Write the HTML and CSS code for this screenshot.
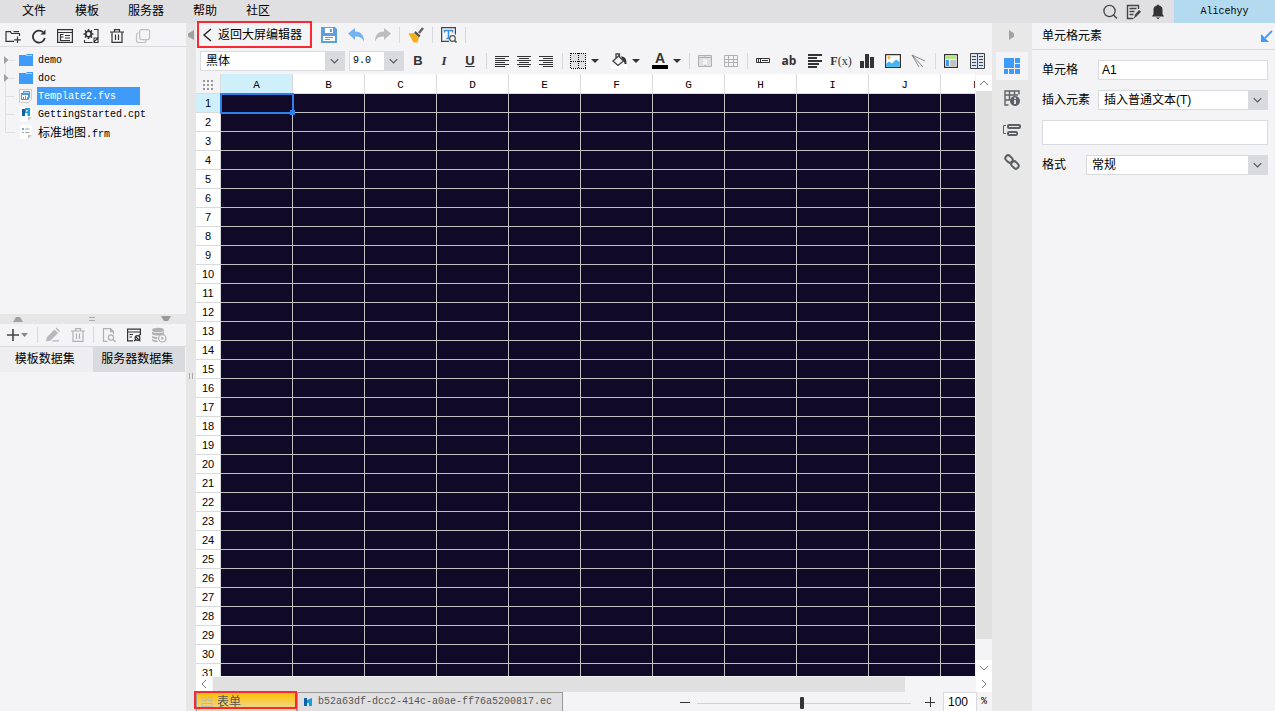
FILE: index.html
```html
<!DOCTYPE html>
<html lang="zh-CN">
<head>
    <meta charset="UTF-8">
    <meta name="viewport" content="width=device-width, initial-scale=1.0">
    <title>大屏编辑器</title>
    <link rel="stylesheet" href="styles.css">
</head>
<body>
    <header class="menubar">
        <nav class="menu">
            <a href="#">文件</a>
            <a href="#">模板</a>
            <a href="#">服务器</a>
            <a href="#">帮助</a>
            <a href="#">社区</a>
        </nav>
        <div class="account">
            <button class="icon-btn" aria-label="搜索"><svg viewBox="0 0 16 16"><circle cx="7.500" cy="7" r="5.600" fill="none" stroke="#444" stroke-width="1.300"/><path d="M11.500 11l3.500 3.500" stroke="#444" stroke-width="1.400"/></svg></button>
            <button class="icon-btn" aria-label="日志"><svg viewBox="0 0 16 16"><path d="M12.500 5V1.500h-11v13h6M3.500 4.500h7M3.500 7.500h5M3.500 10.500h4" fill="none" stroke="#444" stroke-width="1.400"/><path d="M8 14.500l1-4 4-4.500 2 1.500-4 5z" fill="#444"/><path d="M9 14.500l4-4" stroke="#e0e0e2"/></svg></button>
            <button class="icon-btn" aria-label="通知"><svg viewBox="0 0 16 16"><path d="M8 .5c1 0 1 .8 1 1 3 .6 3.500 2.500 3.500 4.500v4l1.500 2.500H2L3.500 10V6c0-2 .5-3.900 3.500-4.500 0-.2 0-1 1-1zM6 13.500h4L8 15.200z" fill="#333"/></svg></button>
            <a class="user mono" href="#">Alicehyy</a>
        </div>
    </header>

    <div class="workspace">
        <aside class="sidebar">
            <section class="files">
                <div class="side-tools">
                    <button class="icon-btn" aria-label="新建文件夹"><svg viewBox="0 0 16 16" fill="none" stroke="#333" stroke-width="1.200"><path d="M9 13.400H1V3.600h4.500l1 1.900h8V8M8.500 3.600H14M12.500 8.500v6.500M9.200 11.800h6.600"/></svg></button>
                    <button class="icon-btn" aria-label="刷新"><svg viewBox="0 0 16 16"><path d="M13.800 10A6 6 0 1 1 12 4.200" fill="none" stroke="#333" stroke-width="1.800"/><path d="M14.500 1.500v5h-5z" fill="#333"/></svg></button>
                    <button class="icon-btn" aria-label="模板目录"><svg viewBox="0 0 16 16" fill="none" stroke="#333" stroke-width="1.200"><path d="M.6 1.600h14.800v12.800H.6zM1 4.500h14M3.500 6v6.500h2M3.500 9h3M8 7.500h5M8 10h5M5.500 12.500h7.500M3.500 6.500h3"/></svg></button>
                    <button class="icon-btn" aria-label="设置"><svg viewBox="0 0 16 16" fill="none" stroke="#333"><circle cx="5.500" cy="6" r="2.800" stroke-width="1.800"/><path d="M5.500 1v1.800M5.500 9.200V11M.5 6h1.800M8.700 6h1.800M2 2.500l1.300 1.300M7.700 8.200L9 9.500M9 2.500L7.700 3.800M3.300 8.200L2 9.500" stroke-width="1.500"/><path d="M11 1.500h4v13h-4M1.500 12v2.500h8M11 10h4l-4 4z" stroke-width="1.100"/></svg></button>
                    <button class="icon-btn" aria-label="删除"><svg viewBox="0 0 16 16" fill="none" stroke="#333" stroke-width="1.200"><path d="M1 4h14M5.500 4V1.600h5V4M3 4v10.400h10V4M6.500 6.500V12M9.500 6.500V12"/></svg></button>
                    <button class="icon-btn" aria-label="复制" disabled><svg viewBox="0 0 16 16" fill="none" stroke="#c0c0c2" stroke-width="1.200"><rect x="4.600" y="1.600" width="10" height="10" rx="2"/><path d="M4.500 5H3a2 2 0 0 0-1.500 2v5.500a2 2 0 0 0 2 2H9a2 2 0 0 0 2-2v-.8"/></svg></button>
                </div>
                <ul class="tree">
                    <li><svg class="twig" viewBox="0 0 15 18"><path d="M5.500 9v9M9 9.500h6" stroke="#e0e0e2"/><path d="M4 5l4.500 4L4 13z" fill="#a0a0a0"/></svg><svg class="file" viewBox="0 0 16 16"><path d="M1 3h7l1-1h6v12H1z" fill="#3f9bfa"/><path d="M8 3.500h6" stroke="#fff" stroke-width=".6"/></svg><a class="mono" href="#">demo</a></li>
                    <li><svg class="twig" viewBox="0 0 15 18"><path d="M5.500 0v18M9 9.500h6" stroke="#e0e0e2"/><path d="M4 5l4.500 4L4 13z" fill="#a0a0a0"/></svg><svg class="file" viewBox="0 0 16 16"><path d="M1 3h7l1-1h6v12H1z" fill="#3f9bfa"/><path d="M8 3.500h6" stroke="#fff" stroke-width=".6"/></svg><a class="mono" href="#">doc</a></li>
                    <li><svg class="twig" viewBox="0 0 15 18"><path d="M5.500 0v18M6 9.500h9" stroke="#e0e0e2"/></svg><svg class="file" viewBox="0 0 16 16"><path d="M1.500 1.500h12v10l-3 3h-9z" fill="#f7f7f7" stroke="#ccc"/><path d="M5.500 3.500h6v6h-6z" fill="#b9dcf5" stroke="#4a9bd8"/><path d="M3.500 5.500h7v6h-7z" fill="#fff" stroke="#4a9bd8"/><path d="M3 6h8" stroke="#4a9bd8" stroke-width="2"/><path d="M5.500 11V9M7.500 11V8M9.500 11V9" stroke="#5aaf60"/></svg><a class="mono selected" href="#">Template2.fvs</a></li>
                    <li><svg class="twig" viewBox="0 0 15 18"><path d="M5.500 0v18M6 9.500h9" stroke="#e0e0e2"/></svg><svg class="file" viewBox="0 0 16 16"><path d="M2 1h12v10l-4 4H2z" fill="#fff"/><path d="M10 15v-4h4z" fill="#c8c8c8"/><path d="M4 3h3v7H4z" fill="#1262a8"/><path d="M7 2h5v8H9.500V7H7z" fill="#139fdc"/><path d="M8 4h1.500v1.500H8z" fill="#fff"/></svg><a class="mono" href="#">GettingStarted.cpt</a></li>
                    <li><svg class="twig" viewBox="0 0 15 18"><path d="M5.500 0v9.500H15" fill="none" stroke="#e0e0e2"/></svg><svg class="file" viewBox="0 0 16 16"><path d="M2 1h12v10l-4 4H2z" fill="#fff"/><path d="M10 15v-4h4z" fill="#c8c8c8"/><path d="M4 4h2v2H4z" fill="#7ba7c8"/><path d="M7 5h4.500M4 8.500h2M7 8.500h4.500" stroke="#aaa"/></svg><a href="#">标准地图<span class="mono">.frm</span></a></li>
                </ul>
            </section>
            <div class="splitter">
                <svg viewBox="0 0 10 6"><path d="M0 6l3-5h4l3 5z" fill="#a0a0a0"/></svg>
                <svg viewBox="0 0 10 6"><path d="M2 1.500h6M2 4.500h6" stroke="#aaa"/></svg>
                <svg viewBox="0 0 10 6"><path d="M0 0l3 5h4l3-5z" fill="#999"/></svg>
            </div>
            <section class="datasets">
                <div class="side-tools">
                    <button class="icon-btn wide" aria-label="新增数据集"><svg viewBox="0 0 24 16"><path d="M7 2v12M1 8h12" stroke="#444" stroke-width="1.600"/><path d="M15 6h7l-3.500 4z" fill="#888"/></svg></button>
                    <span class="sep"></span>
                    <button class="icon-btn" aria-label="编辑" disabled><svg viewBox="0 0 16 16" fill="#b8b8ba"><path d="M1 14.500l1-4.500 7.500-7.500L13 6l-7.500 7.500zM10.500 1.500l1-1L15 4l-1 1zM8 13.200h6v1.400H6.500z"/></svg></button>
                    <button class="icon-btn" aria-label="删除数据集" disabled><svg viewBox="0 0 16 16" fill="none" stroke="#b0b0b2" stroke-width="1.200"><path d="M1 4h14M5.500 4V1.600h5V4M3 4v10.400h10V4M6.500 6.500V12M9.500 6.500V12"/></svg></button>
                    <span class="sep"></span>
                    <button class="icon-btn" aria-label="预览" disabled><svg viewBox="0 0 16 16" fill="none" stroke="#b0b0b2" stroke-width="1.200"><path d="M6.500 14.400h-4V1.600h7l3 3V7M9.500 1.600v3h3"/><circle cx="10" cy="10.500" r="2.600"/><path d="M12 12.500l2.500 2.500"/></svg></button>
                    <button class="icon-btn" aria-label="连接"><svg viewBox="0 0 16 16" fill="none" stroke="#333" stroke-width="1.200"><path d="M7 13.900H1.600V2.100h12.800V7M1.600 5h12.800M3.500 7.500H7M3.500 10H6"/><path d="M8 14l2-1.500M13 8.500l2-1.500M9.500 9.500l4 4M14.400 14.400l-1-1"/><circle cx="11.500" cy="11" r="2.400"/></svg></button>
                    <button class="icon-btn" aria-label="数据库" disabled><svg viewBox="0 0 16 16" fill="#b0b0b2"><ellipse cx="7" cy="3" rx="6" ry="2.300"/><path d="M1 4.500c2 2 10 2 12 0V7c-2 2-10 2-12 0zM1 8.500c1 1 3 1.500 5.500 1.500L6 12c-2 0-4-.5-5-1.500zM1 12c1 1 3 1.300 5 1.300l1 1.700c-3 0-5-.5-6-1.500z"/><circle cx="11.300" cy="11.300" r="3.700" fill="#f4f4f6" stroke="#b0b0b2" stroke-width="1.200"/><path d="M10.300 9.500l3 1.800-3 1.800z"/></svg></button>
                </div>
                <div class="dataset-tabs">
                    <button>模板数据集</button>
                    <button class="active">服务器数据集</button>
                </div>
            </section>
        </aside>

        <div class="gutter">
            <svg viewBox="0 0 10 12"><path d="M8 1v10L2 7.500v-3z" fill="#a0a0a0"/></svg>
            <svg class="grip" viewBox="0 0 10 12"><path d="M3.500 3v6M6.500 3v6" stroke="#aaa"/></svg>
        </div>

        <main class="editor">
            <div class="toolbar top">
                <button class="back"><svg viewBox="0 0 10 14"><path d="M9 1L2 7l7 6" fill="none" stroke="#222" stroke-width="1.400"/></svg>返回大屏编辑器</button>
                <div class="tools loose">
                    <button class="icon-btn" aria-label="保存"><svg viewBox="0 0 16 16"><path d="M0 0h14l2 2v14H0z" fill="#5c9fdf"/><path d="M4 1h8v5H4zM2 9h12v5H2z" fill="#fff"/><path d="M9 2h2v3H9z" fill="#5c9fdf"/><path d="M4 10.500h8M4 12.500h5" stroke="#5c9fdf"/></svg></button>
                    <button class="icon-btn" aria-label="撤销"><svg viewBox="0 0 16 16"><path d="M0 6.500L7 1v3.500c5.500 0 9 3 9 10C14 10.500 11.500 9.500 7 9.500V13z" fill="#74b3ee"/></svg></button>
                    <button class="icon-btn" aria-label="重做"><svg viewBox="0 0 16 16"><path d="M16 6.500L9 1v3.500C3.500 4.500 0 7.500 0 14.500 2 10.500 4.500 9.500 9 9.500V13z" fill="#bcbcbe"/></svg></button>
                </div>
                <span class="sep"></span>
                <button class="icon-btn" aria-label="格式刷"><svg viewBox="0 0 16 16"><path d="M15 1l-4 5" stroke="#666" stroke-width="2.600"/><path d="M7.500 4l5 4.500-1.500 2L6 6z" fill="#555"/><path d="M.5 6.500L6 6l5 4.500-1.500 5H5.500z" fill="#f5ae1c"/></svg></button>
                <span class="sep"></span>
                <button class="icon-btn" aria-label="查找文本"><svg viewBox="0 0 16 16" fill="none"><path d="M8 14.400H.6V.6h13.800v7" stroke="#444" stroke-width="1.200"/><path d="M3.500 5.500v-2h8v2M7.500 3.500v8M5.500 11.500h3" stroke="#3b8ee0" stroke-width="1.500"/><circle cx="11.500" cy="11.500" r="2.800" fill="#f4f4f6" stroke="#555" stroke-width="1.200"/><path d="M13.500 13.500l2 2" stroke="#555" stroke-width="1.600"/></svg></button>
                <span class="sep"></span>
            </div>

            <div class="toolbar format">
                <div class="dropdown font-name">
                    <select aria-label="字体"><option>黑体</option></select>
                    <svg viewBox="0 0 20 18"><path d="M6 7l4 4 4-4" fill="none" stroke="#555" stroke-width="1.200"/></svg>
                </div>
                <div class="dropdown font-size">
                    <select class="mono" aria-label="字号"><option>9.0</option></select>
                    <svg viewBox="0 0 20 18"><path d="M6 7l4 4 4-4" fill="none" stroke="#555" stroke-width="1.200"/></svg>
                </div>
                <div class="tools">
                    <button class="icon-btn letter"><b>B</b></button>
                    <button class="icon-btn letter"><i>I</i></button>
                    <button class="icon-btn letter"><u>U</u></button>
                </div>
                <span class="sep"></span>
                <div class="tools tight">
                    <button class="icon-btn" aria-label="左对齐"><svg viewBox="0 0 16 16"><path d="M1 3.500h14M1 5.500h10M1 7.500h14M1 9.500h10M1 11.500h14M1 13.500h10" stroke="#333"/></svg></button>
                    <button class="icon-btn" aria-label="居中"><svg viewBox="0 0 16 16"><path d="M1 3.500h14M3 5.500h10M1 7.500h14M3 9.500h10M1 11.500h14M3 13.500h10" stroke="#333"/></svg></button>
                    <button class="icon-btn" aria-label="右对齐"><svg viewBox="0 0 16 16"><path d="M1 3.500h14M5 5.500h10M1 7.500h14M5 9.500h10M1 11.500h14M5 13.500h10" stroke="#333"/></svg></button>
                </div>
                <span class="sep"></span>
                <div class="tools pickers">
                    <button class="picker" aria-label="边框"><svg viewBox="0 0 16 16"><path d="M1 1h14v14H1z" fill="#e0e0e2"/><path d="M1 .5h15M1 8.500h15M1 15.500h15M.5 0v16M8.500 0v16M15.500 0v16" stroke="#000" stroke-dasharray="1 1"/></svg><span class="caret"></span></button>
                    <button class="picker" aria-label="填充颜色"><svg viewBox="0 0 16 16"><path d="M0 12h16v4H0z" fill="#fff"/><path d="M2 8l5.500-5 5 5L7 12.500zM5 6V1h3.500v4" fill="#f4f4f6" stroke="#444" stroke-width="1.300"/><path d="M10 3.500c4 0 5.500 2 5.500 7.500h-2c0-2-.5-3-1.500-3.500z" fill="#333"/></svg><span class="caret"></span></button>
                    <button class="picker" aria-label="字体颜色"><span class="font-color">A</span><span class="caret"></span></button>
                </div>
                <span class="sep"></span>
                <div class="tools">
                    <button class="icon-btn" aria-label="合并单元格" disabled><svg viewBox="0 0 16 16"><path d="M1.500 2.500h13v11h-13z" fill="#e0e0e2" stroke="#b0b0b2"/><path d="M1 4.500h14M8 2v3M8 11v3" stroke="#b0b0b2"/><path d="M6 7h3.500v4H6.500V9h3" fill="none" stroke="#fff"/></svg></button>
                    <button class="icon-btn" aria-label="拆分单元格" disabled><svg viewBox="0 0 16 16"><path d="M1.500 2.500h13v11h-13zM1 6.500h14M1 9.500h14M5.500 2v12M10.500 2v12" fill="none" stroke="#b0b0b2"/></svg></button>
                </div>
                <span class="sep"></span>
                <div class="tools">
                    <button class="icon-btn" aria-label="数据列"><svg viewBox="0 0 16 16"><path d="M1.500 5.500h13v4h-13zM5.500 5v5M3.500 6v3M7 7.500h6" fill="none" stroke="#333"/></svg></button>
                    <button class="icon-btn letter ab">ab</button>
                    <button class="icon-btn" aria-label="富文本"><svg viewBox="0 0 16 16"><path d="M1 2h14M1 5h9M1 8h14M1 11h11M1 14h9" stroke="#333" stroke-width="1.800"/></svg></button>
                    <button class="icon-btn letter fx"><b>F</b>(x)</button>
                    <button class="icon-btn" aria-label="图表"><svg viewBox="0 0 16 16"><path d="M1 8h4v7H1zM6 1h4v14H6zM11 4h4v11h-4z" fill="#333"/></svg></button>
                    <button class="icon-btn" aria-label="图片"><svg viewBox="0 0 16 16"><path d="M.6 1.600h14.800v12.800H.6z" fill="#fff" stroke="#333" stroke-width="1.200"/><path d="M1.200 13.800v-3L4 8.500l3 2 4-4 3.800 2.500v4.800z" fill="#3fb8f5"/><circle cx="4" cy="4.500" r="1.500" fill="#f5b53c"/></svg></button>
                    <button class="icon-btn" aria-label="斜线"><svg viewBox="0 0 16 16"><path d="M1 2l13 6M1 2l11 12M1 2l7 12" fill="none" stroke="#888"/></svg></button>
                </div>
                <span class="sep"></span>
                <div class="tools">
                    <button class="icon-btn" aria-label="子报表"><svg viewBox="0 0 16 16"><path d="M1.600 1.600h12.800v12.800H1.600z" fill="#fff" stroke="#333" stroke-width="1.200"/><path d="M3 3h10v3H3z" fill="#b3e67e"/><path d="M3 7h3v6H3z" fill="#3f9bfa"/><path d="M7 7h6v6H7z" fill="#c4c4c6"/></svg></button>
                    <button class="icon-btn" aria-label="分栏"><svg viewBox="0 0 16 16"><path d="M1.500.5h14v15h-14z" fill="#dce8fa" stroke="#444"/><path d="M8.500 1v14M3 3.500h4M3 6.500h4M3 9.500h4M3 12.500h4M10 3.500h4M10 6.500h4M10 9.500h4M10 12.500h4" stroke="#444"/></svg></button>
                </div>
            </div>

            <div class="sheet">
                <div class="cells">
                    <table id="grid">
                        <thead>
                            <tr>
                                <th class="corner"><svg viewBox="0 0 12 10"><path d="M1 1h12M1 5h12M1 9h12" stroke="#999" stroke-width="2" stroke-dasharray="2 2"/></svg></th>
                            </tr>
                        </thead>
                        <tbody></tbody>
                    </table>
                </div>
                <div class="scroll vertical">
                    <button aria-label="向上"><svg viewBox="0 0 16 16"><path d="M4 10l4-4 4 4" fill="none" stroke="#777"/></svg></button>
                    <div class="thumb"></div>
                    <button aria-label="向下"><svg viewBox="0 0 16 16"><path d="M4 6l4 4 4-4" fill="none" stroke="#777"/></svg></button>
                </div>
            </div>
            <div class="scroll horizontal">
                <button aria-label="向左"><svg viewBox="0 0 16 16"><path d="M10 4L6 8l4 4" fill="none" stroke="#777"/></svg></button>
                <div class="thumb"></div>
                <button aria-label="向右"><svg viewBox="0 0 16 16"><path d="M6 4l4 4-4 4" fill="none" stroke="#777"/></svg></button>
            </div>

            <footer class="statusbar">
                <button class="sheet-tab current"><svg viewBox="0 0 12 12"><path d="M1 1.500h4v3H1zM7 1.500h4v3H7zM1 7.500h10v3H1z" fill="none" stroke="#b8b8b8"/></svg>表单</button>
                <button class="sheet-tab mono"><svg viewBox="0 0 12 12"><path d="M2 2h3v8H2z" fill="#1262a8"/><path d="M5 4l5-2v8H7V7H5z" fill="#139fdc"/></svg>b52a63df-dcc2-414c-a0ae-ff76a5200817.ec</button>
                <div class="zoom">
                    <button class="step" aria-label="缩小"><svg viewBox="0 0 10 10"><path d="M0 5.500h10" stroke="#333"/></svg></button>
                    <input type="range" aria-label="缩放" min="0" max="100" value="49">
                    <button class="step" aria-label="放大"><svg viewBox="0 0 10 10"><path d="M0 5.500h10M5.500 0v10" stroke="#333"/></svg></button>
                    <input type="text" id="zoomValue" value="100">
                    <label class="mono" for="zoomValue">%</label>
                </div>
            </footer>
        </main>

        <nav class="rail">
            <svg class="fold" viewBox="0 0 8 12"><path d="M1 1v10l5-3.500v-3z" fill="#a0a0a0"/></svg>
            <button class="active" aria-label="单元格元素"><svg viewBox="0 0 16 16" fill="#3f9bfa"><path d="M0 0h10v10H0zM11 0h5v5h-5zM11 6h5v4h-5zM0 11h4v5H0zM5 11h5v5H5zM11 11h5v5h-5z"/></svg></button>
            <button aria-label="单元格属性"><svg viewBox="0 0 16 16"><path d="M4.500 15H1V1h14v3.500M1 5h13M1 10h5M5.500 1v9M10.500 1v4" fill="none" stroke="#5c6066" stroke-width="1.400"/><circle cx="11" cy="11" r="5" fill="#5c6066"/><path d="M11 7.500v1.600M11 10v4" stroke="#fff" stroke-width="1.600"/></svg></button>
            <button aria-label="条件属性"><svg viewBox="0 0 18 16" fill="none" stroke="#5c6066"><path d="M3 3.500H.5v8H3"/><rect x="5" y="3" width="12" height="3" rx="1" stroke-width="2"/><rect x="5" y="10" width="9" height="3" rx="1" stroke-width="2"/></svg></button>
            <button aria-label="超级链接"><svg viewBox="0 0 16 16" fill="none" stroke="#5c6066" stroke-width="2"><rect x="-4" y="-2.800" width="8" height="5.600" rx="2.800" transform="translate(5 5) rotate(45)"/><rect x="-4" y="-2.800" width="8" height="5.600" rx="2.800" transform="translate(11 11) rotate(45)"/></svg></button>
        </nav>

        <aside class="panel">
            <div class="panel-title">单元格元素
                <button class="icon-btn" aria-label="弹出"><svg viewBox="0 0 16 16"><path d="M13 3L6 10" stroke="#3f9bfa" stroke-width="1.800"/><path d="M2 6v8h8z" fill="#3f9bfa"/></svg></button>
            </div>
            <form class="props">
                <div class="field">
                    <label for="cellName">单元格</label>
                    <input type="text" id="cellName" value="A1">
                </div>
                <div class="field">
                    <label for="element">插入元素</label>
                    <div class="dropdown">
                        <select id="element"><option>插入普通文本(T)</option></select>
                        <svg viewBox="0 0 20 18"><path d="M6 7l4 4 4-4" fill="none" stroke="#555" stroke-width="1.200"/></svg>
                    </div>
                </div>
                <input type="text" class="content" aria-label="内容">
                <div class="field short">
                    <label for="cellFormat">格式</label>
                    <div class="dropdown">
                        <select id="cellFormat"><option>常规</option></select>
                        <svg viewBox="0 0 20 18"><path d="M6 7l4 4 4-4" fill="none" stroke="#555" stroke-width="1.200"/></svg>
                    </div>
                </div>
            </form>
        </aside>
    </div>

    <script>
        const columns = 'ABCDEFGHIJK'.split('');
        const rowCount = 31;

        function renderGrid() {
            const headRow = document.querySelector('#grid thead tr');
            const body = document.querySelector('#grid tbody');

            for (const name of columns) {
                const th = document.createElement('th');
                th.textContent = name;
                if (name === 'A') th.className = 'active';
                headRow.appendChild(th);
            }

            for (let i = 1; i <= rowCount; i++) {
                const row = document.createElement('tr');
                row.innerHTML = `<th class="${i === 1 ? 'active' : ''}">${i}</th>` + '<td></td>'.repeat(columns.length);
                body.appendChild(row);
            }

            body.querySelector('td').className = 'selected';
        }

        renderGrid();
    </script>
</body>
</html>
```
FILE: styles.css
```css
* {
    box-sizing: border-box;
}

body {
    margin: 0;
    height: 100vh;
    display: flex;
    flex-direction: column;
    overflow: hidden;
    background: #f4f4f6;
    color: #000;
    font-family: "Liberation Sans", "Noto Sans CJK SC", sans-serif;
    font-size: 12px;
    line-height: 18px;
}

a {
    color: inherit;
    text-decoration: none;
}

button, input, select {
    font: inherit;
    color: inherit;
    margin: 0;
    padding: 0;
    border: none;
    border-radius: 0;
    background: none;
}

svg {
    display: block;
    flex: none;
}

.mono {
    font-family: "Liberation Mono", "Noto Sans CJK SC", monospace;
    font-size: 10px;
}

.icon-btn {
    flex: none;
    width: 16px;
    height: 16px;
}

.icon-btn svg {
    width: 100%;
    height: 16px;
}

.icon-btn.wide {
    width: 24px;
}

.sep {
    flex: none;
    width: 1px;
    height: 16px;
    margin: 0 8px;
    background: #d9dadd;
}

/* menu bar */
.menubar {
    flex: none;
    height: 23px;
    display: flex;
    justify-content: space-between;
    background: #e0e0e2;
}

.menu {
    display: flex;
    align-items: center;
    gap: 29px;
    padding-left: 22px;
    padding-bottom: 1px;
}

.account {
    display: flex;
    align-items: center;
    gap: 8px;
}

.account .icon-btn {
    height: 18px;
}

.user {
    width: 101px;
    line-height: 23px;
    text-align: center;
    background: #b4daf0;
}

.workspace {
    flex: 1;
    min-height: 0;
    display: flex;
}

/* left side */
.sidebar {
    flex: none;
    width: 186px;
    display: flex;
    flex-direction: column;
}

.files {
    flex: 3;
}

.datasets {
    flex: 4;
}

.side-tools {
    display: flex;
    align-items: center;
    gap: 10px;
    height: 24px;
    padding: 2px 5px 0;
    border-bottom: 1px solid #d9dadd;
}

.datasets .side-tools {
    gap: 9px;
    height: 23px;
    padding: 0 6px;
}

.datasets .sep {
    margin: 0 -2px;
}

.tree {
    list-style: none;
    margin: 0;
    padding: 4px 0;
}

.tree li {
    display: flex;
    align-items: center;
    height: 18px;
}

.twig {
    width: 15px;
    height: 18px;
}

.file {
    width: 16px;
    height: 16px;
    margin: 0 3px;
}

.tree a {
    height: 18px;
    padding: 1px 1px 0;
}

.tree .selected {
    min-width: 103px;
    background: #3f9bfa;
    color: #fff;
}

.splitter {
    display: flex;
    align-items: center;
    justify-content: space-between;
    height: 10px;
    padding: 0 15px 0 13px;
    background: #e6e6e6;
}

.splitter svg {
    width: 10px;
    height: 6px;
}

.dataset-tabs {
    display: flex;
    padding-right: 1px;
}

.dataset-tabs button {
    flex: 1;
    height: 25px;
    padding-right: 3px;
    background: #eeeef0;
}

.dataset-tabs .active {
    background: #d9dadd;
}

.gutter {
    flex: none;
    width: 10px;
    display: flex;
    flex-direction: column;
    padding-top: 6px;
    background: #e6e6e6;
}

.gutter svg {
    width: 10px;
    height: 12px;
}

.gutter .grip {
    margin: auto 0;
}

/* editor */
.editor {
    flex: 1;
    min-width: 0;
    display: flex;
    flex-direction: column;
}

.toolbar {
    flex: none;
    display: flex;
    align-items: center;
}

.toolbar.top {
    height: 24px;
    padding-left: 1px;
}

.toolbar.format {
    height: 27px;
    padding-left: 4px;
}

.format .sep {
    margin: 0 7px 0 8px;
}

.back {
    position: relative;
    display: flex;
    align-items: center;
    gap: 6px;
    width: 115px;
    padding-left: 5px;
    margin-right: 9px;
}

.back svg {
    width: 10px;
    height: 14px;
}

.back::after {
    content: "";
    position: absolute;
    inset: -5px 0 -4px;
    border: 2px solid #fa2832;
}

.tools {
    display: flex;
    align-items: center;
    gap: 10px;
}

.tools.loose {
    gap: 11px;
}

.tools.tight {
    gap: 6px;
}

.tools.pickers {
    gap: 12px;
}

.letter {
    color: #333;
    font-size: 13px;
    line-height: 16px;
}

.letter i {
    font-family: "Liberation Serif", serif;
    font-weight: bold;
}

.letter u {
    font-weight: bold;
}

.letter.ab {
    font-family: "Open Sans", sans-serif;
    font-size: 12px;
    font-weight: bold;
}

.letter.fx {
    font-family: "Liberation Serif", serif;
    font-size: 12px;
    white-space: nowrap;
    display: flex;
    justify-content: center;
}

.picker {
    display: flex;
    align-items: center;
    gap: 5px;
}

.picker svg {
    width: 16px;
    height: 16px;
}

.caret {
    border: 4px solid transparent;
    border-top-color: #333;
    border-bottom: none;
}

.font-color {
    width: 16px;
    height: 16px;
    border-bottom: 4px solid #000;
    color: #333;
    font-size: 14px;
    font-weight: bold;
    line-height: 11px;
}

.dropdown {
    position: relative;
    flex: 1;
    height: 20px;
    border: 1px solid #d9dadd;
    background: #fff;
}

.dropdown select {
    appearance: none;
    display: block;
    width: 100%;
    height: 18px;
    padding-left: 5px;
    line-height: 18px;
}

.dropdown svg {
    position: absolute;
    top: 0;
    right: 0;
    width: 19px;
    height: 18px;
    background: #d9dadd;
    pointer-events: none;
}

.dropdown.font-name {
    flex: none;
    width: 145px;
    margin-right: 4px;
}

.dropdown.font-size {
    flex: none;
    width: 55px;
    margin-right: 6px;
}

.font-size select {
    padding-left: 3px;
}

/* grid */
.sheet {
    flex: 1;
    min-height: 0;
    display: flex;
}

.cells {
    flex: 1;
    min-width: 0;
    overflow: hidden;
    background: #100a28;
}

#grid {
    table-layout: fixed;
    width: 817px;
    border-spacing: 0;
}

#grid th {
    width: 72px;
    height: 19px;
    padding: 0;
    border-right: 1px solid #d9dadd;
    border-bottom: 1px solid #d9dadd;
    background: #fff;
    font-size: 11px;
    font-weight: normal;
    line-height: 18px;
}

#grid thead th {
    height: 20px;
    font-family: "Liberation Mono", monospace;
    font-size: 11px;
    line-height: 16px;
    padding-top: 3px;
}

#grid .corner {
    width: 25px;
    background: #f4f4f6;
}

.corner svg {
    width: 12px;
    height: 10px;
    margin: 0 auto;
}

#grid th.active {
    background: #cff0fb;
}

#grid td {
    padding: 0;
    border-right: 1px solid #c0c0c0;
    border-bottom: 1px solid #c0c0c0;
}

#grid td.selected {
    position: relative;
}

td.selected::before {
    content: "";
    position: absolute;
    inset: -1px -2px -2px -1px;
    border: 2px solid #2f7fe8;
}

td.selected::after {
    content: "";
    position: absolute;
    right: -3px;
    bottom: -3px;
    width: 5px;
    height: 5px;
    background: #2f7fe8;
}

.scroll {
    flex: none;
    display: flex;
    justify-content: space-between;
}

.scroll button {
    flex: none;
    width: 16px;
    height: 16px;
    background: #fff;
}

.scroll svg {
    width: 16px;
    height: 16px;
}

.scroll .thumb {
    background: #e0e0e0;
}

.scroll.vertical {
    flex-direction: column;
    width: 17px;
    padding: 1px 0 0 1px;
}

.vertical .thumb {
    flex: 0 1 96%;
    margin-bottom: auto;
}

.vertical .thumb + button {
    margin-top: 21px;
}

.scroll.horizontal {
    height: 16px;
}

.horizontal .thumb {
    flex: 0 1 100%;
    margin: 1px 71px 0 1px;
}

/* status bar */
.statusbar {
    flex: none;
    display: flex;
    height: 19px;
}

.sheet-tab {
    position: relative;
    display: flex;
    align-items: center;
    gap: 4px;
    padding: 0 10px 0 4px;
    border: 1px solid #999;
    border-bottom: none;
    background: #e0e0e2;
    color: #555;
    white-space: nowrap;
}

.sheet-tab svg {
    width: 12px;
    height: 12px;
}

.sheet-tab.current {
    width: 101px;
    background: linear-gradient(#ffc000, #ecdca8);
}

.sheet-tab.current::after {
    content: "";
    position: absolute;
    inset: -2px -1px 2px -3px;
    border: 2px solid #fa2832;
}

.zoom {
    display: flex;
    align-items: center;
    margin-left: auto;
}

.step {
    width: 10px;
    height: 10px;
}

.step svg {
    width: 10px;
    height: 10px;
}

.zoom input[type="range"] {
    appearance: none;
    width: 214px;
    height: 12px;
    margin: 3px 14px 0 7px;
}

.zoom input[type="range"]::-webkit-slider-runnable-track {
    height: 1px;
    background: #d0d0d2;
}

.zoom input[type="range"]::-webkit-slider-thumb {
    appearance: none;
    width: 4px;
    height: 12px;
    margin-top: -6px;
    border-radius: 1px;
    background: #333;
}

.zoom input[type="text"] {
    width: 34px;
    height: 19px;
    margin: 0 4px 0 8px;
    padding-left: 4px;
    border: 1px solid #d9dadd;
    border-bottom: none;
    background: #fff;
}

.zoom label {
    width: 11px;
}

/* right side */
.rail {
    flex: none;
    width: 40px;
    display: flex;
    flex-direction: column;
    align-items: center;
    gap: 4px;
    padding-top: 6px;
    background: #e8e8e8;
}

.rail .fold {
    width: 8px;
    height: 12px;
    margin-bottom: 7px;
}

.rail button {
    display: flex;
    align-items: center;
    justify-content: center;
    width: 32px;
    height: 28px;
}

.rail button svg {
    height: 16px;
}

.rail .active {
    background: #f4f4f6;
}

.panel {
    flex: none;
    width: 243px;
}

.panel-title {
    display: flex;
    align-items: center;
    justify-content: space-between;
    height: 27px;
    padding-left: 10px;
    border-bottom: 1px solid #d9dadd;
}

.props {
    display: flex;
    flex-direction: column;
    gap: 10px;
    padding: 10px 7px 10px 10px;
}

.field {
    display: flex;
    align-items: center;
}

.field label {
    flex: none;
    width: 56px;
}

.field.short label {
    width: 44px;
}

.props input {
    flex: 1;
    min-width: 0;
    height: 20px;
    padding-left: 3px;
    border: 1px solid #d9dadd;
    background: #fff;
}

.props .content {
    flex: none;
    height: 25px;
}
```
